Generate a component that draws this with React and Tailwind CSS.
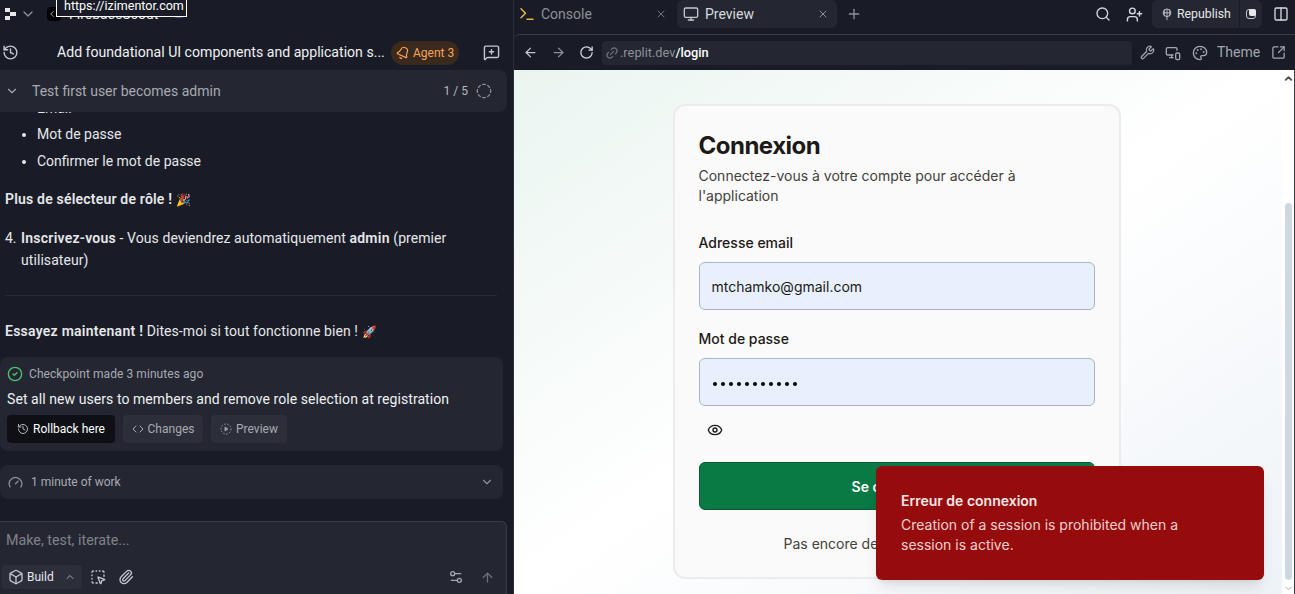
import React from 'react';
import {
  ArrowLeft, ArrowRight, ArrowUp, Bell, Box, ChevronDown, ChevronLeft, ChevronUp, CircleCheck, CircleDashed,
  Code, Columns2, Eye, Gauge, History, Link2, MessageSquarePlus, Monitor, MonitorSmartphone, Palette,
  Paperclip, Plus, RotateCw, Search, Settings2, SquareArrowOutUpRight, SquareDashedMousePointer,
  Terminal, UserPlus, Wrench, X,
} from 'lucide-react';

const plex = 'font-["Roboto",sans-serif]';

function Logo() {
  return (
    <svg width="12" height="12" viewBox="0 0 12 12" fill="#e8e8ea">
      <rect x="0" y="0" width="5" height="4" />
      <rect x="5" y="4" width="6" height="4" />
      <rect x="0" y="8" width="5" height="4" />
    </svg>
  );
}

function RepublishIcon() {
  return (
    <svg width="12" height="15" viewBox="0 0 14 16" fill="none" stroke="#c9cbd0" strokeWidth="1">
      <circle cx="7" cy="6" r="4.5" />
      <path d="M2.500 6h9M7 1.500v9M4.500 2.500c-1 2.300-1 4.700 0 7M9.500 2.500c1 2.300 1 4.700 0 7M7 10.500v4" />
    </svg>
  );
}

function DashedPlay() {
  return (
    <svg width="12" height="12" viewBox="0 0 24 24" fill="none" stroke="#9a9da6" strokeWidth="2">
      <circle cx="12" cy="12" r="10" strokeDasharray="3 3" />
      <path d="M10 8l6 4-6 4z" fill="#9a9da6" />
    </svg>
  );
}

function ChatPanel() {
  return (
    <div className={`w-[514px] shrink-0 h-full flex flex-col bg-[#191c26] border-r border-[#2c2f39] overflow-hidden ${plex}`}>
      <div className="h-[28px] mb-[7px] shrink-0 flex items-center pl-[5px]">
        <Logo />
        <ChevronDown className="w-4 h-4 ml-[3px] text-[#8d9099]" />
        <div className="ml-[11px] w-[14px] h-[14px] flex items-center rounded-sm bg-black">
          <ChevronLeft className="w-[10px] h-[10px] text-[#c4c6cc]" />
        </div>
        <span className="ml-[8px] text-[14px] text-[#e6e7ea]">FirebaseScout</span>
        <div className="ml-[15px] w-[11px] h-[8px] rounded-sm bg-[#4b4590]" />
      </div>
      <div className="h-[35px] shrink-0 flex items-center pl-[2px]">
        <History className="w-[17px] h-[17px] text-[#c4c6cc]" />
        <span className="ml-[38px] w-[334px] text-[14.1px] text-[#eef0f3] whitespace-nowrap">Add foundational UI components and application s...</span>
        <span className="flex items-center gap-[3px] h-[24px] px-[5px] rounded-full bg-[#3a2a1e] text-[12px] text-[#f9a25a]">
          <Bell className="w-[14px] h-[14px] rotate-[25deg]" />
          Agent 3
        </span>
        <MessageSquarePlus className="ml-[24px] w-[17px] h-[17px] text-[#c4c6cc]" />
      </div>
      <div className="relative z-10 h-[42px] w-[507px] shrink-0 flex items-center pl-[5px] pr-[15px] rounded-lg rounded-l-none bg-[#242731]">
        <ChevronDown className="w-[14px] h-[14px] text-[#a4a6ad]" />
        <span className="ml-[13px] text-[14px] text-[#a8aab1]">Test first user becomes admin</span>
        <span className="ml-auto text-[12px] text-[#b5b7bd]">1 / 5</span>
        <CircleDashed className="ml-[8px] w-4 h-4 text-[#8d9099]" />
      </div>
      <div className="flex-1 min-h-0 overflow-hidden px-[5px] text-[14px] text-[#e6e7ea]">
        <ul className="-mt-[17px] list-disc pl-[32px] leading-[27px]">
          <li className="leading-[26px]">Email</li>
          <li>Mot de passe</li>
          <li>Confirmer le mot de passe</li>
        </ul>
        <p className="mt-[13px] leading-[22px] font-semibold tracking-[0.2px]">Plus de sélecteur de rôle ! <span className="text-[12px]">🎉</span></p>
        <div className="mt-[16px] w-[470px] flex leading-[22px]">
          <span className="w-[16px] shrink-0">4.</span>
          <p className="tracking-[0.07px]"><b className="font-semibold tracking-[0.25px]">Inscrivez-vous</b> - Vous deviendrez automatiquement <b className="font-semibold tracking-[0.25px]">admin</b> (premier utilisateur)</p>
        </div>
        <div className="mt-[24px] w-[492px] h-px bg-[#282b35]" />
        <p className="mt-[24px] leading-[22px] tracking-[0.07px]"><b className="font-semibold tracking-[0.25px]">Essayez maintenant !</b> Dites-moi si tout fonctionne bien ! <span className="text-[12px]">🚀</span></p>
        <div className="-ml-[5px] mt-[14px] w-[503px] h-[94px] rounded-lg bg-[#242731] pl-[7px] pt-[8px]">
          <div className="flex items-center gap-[6px] text-[12px] tracking-[0.07px] text-[#a8aab1]">
            <CircleCheck className="w-[16px] h-[16px] text-[#4cc36e]" />
            Checkpoint made 3 minutes ago
          </div>
          <p className="mt-[6px] leading-[20px] tracking-[0.07px] text-[#eef0f3]">Set all new users to members and remove role selection at registration</p>
          <div className="mt-[6px] flex gap-[8px] text-[12px]">
            <span className="h-[28px] w-[108px] flex items-center justify-center gap-[4px] rounded bg-[#0e1016] text-white">
              <History className="w-[12px] h-[12px] text-[#b5b7bd]" />
              Rollback here
            </span>
            <span className="h-[28px] w-[80px] flex items-center justify-center gap-[4px] rounded bg-[#2c2f39] text-[#a8aab1]">
              <Code className="w-[12px] h-[12px]" />
              Changes
            </span>
            <span className="h-[28px] w-[76px] flex items-center justify-center gap-[4px] rounded bg-[#2c2f39] text-[#a8aab1]">
              <DashedPlay />
              Preview
            </span>
          </div>
        </div>
        <div className="-ml-[5px] mt-[14px] w-[503px] h-[34px] flex items-center rounded-lg bg-[#242731] pl-[8px] pr-[9px] text-[12px] text-[#a8aab1]">
          <Gauge className="w-[15px] h-[15px] text-[#8d9099]" />
          <span className="ml-[8px]">1 minute of work</span>
          <ChevronDown className="ml-auto w-[14px] h-[14px] text-[#8d9099]" />
        </div>
      </div>
      <div className="h-[73px] w-[507px] shrink-0 rounded-tr-md border-t border-r border-[#3a3d47] bg-[#242731] flex flex-col">
        <div className="pl-[6px] pt-[8px] text-[14.3px] leading-[20px] text-[#7f828b]">Make, test, iterate...</div>
        <div className="mt-auto mb-[5px] flex items-center pl-[2px] pr-[11px]">
          <span className="h-[24px] w-[80px] flex items-center pl-[6px] rounded bg-[#2c2f39] text-[12px] text-[#e6e7ea]">
            <Box className="w-[16px] h-[16px] text-[#c4c6cc]" />
            <span className="ml-[3px]">Build</span>
            <ChevronUp className="ml-[10px] w-[12px] h-[12px] text-[#a4a6ad]" />
          </span>
          <SquareDashedMousePointer className="ml-[8px] w-[16px] h-[16px] text-[#c4c6cc]" />
          <Paperclip className="ml-[12px] w-[16px] h-[16px] text-[#c4c6cc]" />
          <Settings2 className="ml-auto w-[16px] h-[16px] text-[#a4a6ad]" />
          <ArrowUp className="ml-[16px] w-[15px] h-[15px] text-[#6f727b]" />
        </div>
      </div>
    </div>
  );
}

function TabBar() {
  return (
    <div className={`h-[34px] shrink-0 flex items-center pb-[6px] ${plex}`}>
      <div className="w-[163px] h-[28px] flex items-center pl-[4px] text-[14px] text-[#8d9099]">
        <Terminal className="w-[18px] h-[18px] text-[#e0b84c]" />
        <span className="ml-[5px]">Console</span>
        <X className="ml-auto mr-[10px] w-[12px] h-[12px] text-[#6f727b]" />
      </div>
      <div className="w-[160px] h-[28px] flex items-center pl-[6px] rounded-md bg-[#242731] text-[14px] text-[#d7d9dd]">
        <Monitor className="w-[16px] h-[16px] text-[#c4c6cc]" />
        <span className="ml-[6px]">Preview</span>
        <X className="ml-auto mr-[8px] w-[12px] h-[12px] text-[#8d9099]" />
      </div>
      <Plus className="ml-[9px] w-[16px] h-[16px] text-[#8d9099]" />
      <Search className="ml-auto w-[16px] h-[16px] text-[#d7d9dd]" />
      <UserPlus className="ml-[15px] w-[17px] h-[17px] text-[#d7d9dd]" />
      <div className="ml-[9px] h-[28px] flex rounded-md bg-[#242731]">
        <span className="w-[88px] flex items-center pl-[9px] gap-[4px] text-[12.3px] text-[#e6e7ea] border-r border-[#191c26]">
          <RepublishIcon />
          Republish
        </span>
        <span className="w-[22px] flex items-center justify-center">
          <span className="relative w-[10px] h-[10px] rounded-[3px] border border-[#c4c6cc]">
            <span className="absolute -top-px -right-px w-[7px] h-[7px] rounded-[2px] bg-[#e6e7ea]" />
          </span>
        </span>
      </div>
      <Columns2 className="ml-[11px] mr-[6px] w-[16px] h-[16px] text-[#d7d9dd]" />
    </div>
  );
}

function UrlBar() {
  return (
    <div className={`h-[36px] shrink-0 flex items-center rounded-tl-md border-t border-[#3a3d47] pl-[9px] ${plex}`}>
      <ArrowLeft className="w-[15px] h-[15px] text-[#c4c6cc]" />
      <ArrowRight className="ml-[13px] w-[15px] h-[15px] text-[#8d9099]" />
      <RotateCw className="ml-[13px] w-[15px] h-[15px] text-[#d7d9dd]" />
      <div className="ml-[8px] w-[530px] h-[24px] flex items-center pl-[3px] rounded bg-[#242731] text-[12.8px]">
        <Link2 className="w-[14px] h-[14px] -rotate-45 text-[#6f727b]" />
        <span className="ml-[1px] text-[#8d9099]">.replit.dev</span>
        <span className="font-medium text-white">/login</span>
      </div>
      <Wrench className="ml-[8px] w-[15px] h-[15px] text-[#a4a6ad]" />
      <MonitorSmartphone className="ml-[10px] w-[16px] h-[16px] text-[#a4a6ad]" />
      <Palette className="ml-[11px] w-[16px] h-[16px] text-[#a4a6ad]" />
      <span className="ml-[9px] text-[14px] text-[#a4a6ad]">Theme</span>
      <SquareArrowOutUpRight className="ml-[11px] w-[15px] h-[15px] text-[#a4a6ad]" />
    </div>
  );
}

function LoginPage() {
  return (
    <div className="relative flex-1 min-h-0 flex bg-white overflow-hidden font-['Inter',sans-serif]">
      <div className="flex-1 bg-gradient-to-br from-[#eaf5f0] via-white to-[#eef3f8] overflow-hidden flex justify-center pt-[34px] pr-[3px]">
        <div className="w-[448px] h-[475px] shrink-0 rounded-xl border-2 border-[#ececee] bg-[#fafafa] px-[24px] pt-[24px]">
          <h1 className="text-[24px] leading-[32px] font-bold tracking-[-0.5px] text-[#1c1917]">Connexion</h1>
          <p className="mt-[4px] w-[380px] text-[14px] leading-[20px] text-[#44403c]">Connectez-vous à votre compte pour accéder à l'application</p>
          <label className="block mt-[27px] text-[14px] leading-[20px] font-medium text-[#1c1917]">Adresse email</label>
          <div className="mt-[9px] h-[48px] flex items-center px-[12px] rounded-md border border-[#aab4c6] bg-[#e8f0fe] text-[14px] text-[#1c1917]">mtchamko@gmail.com</div>
          <label className="block mt-[19px] text-[14px] leading-[20px] font-medium text-[#1c1917]">Mot de passe</label>
          <div className="mt-[9px] h-[48px] flex items-center gap-[4px] px-[13px] pt-[3px] rounded-md border border-[#aab4c6] bg-[#e8f0fe]">
            {Array.from({ length: 11 }).map((_, i) => (
              <span key={i} className="w-[4px] h-[4px] rounded-full bg-black" />
            ))}
          </div>
          <Eye className="mt-[16px] ml-[8px] w-[16px] h-[16px] text-[#1c1917]" />
          <div className="mt-[24px] h-[48px] flex items-center justify-center rounded-md border border-[#075c34] bg-[#0a7a45] text-[14px] font-semibold text-white">Se connecter</div>
          <p className="mt-[24px] text-center text-[14px] leading-[20px] text-[#44403c]">Pas encore de compte ? S'inscrire</p>
        </div>
      </div>
      <div className="w-[13px] shrink-0 flex flex-col items-center bg-white border-r border-[#3a3d47]">
        <ChevronUp className="mt-[3px] w-[11px] h-[11px] text-[#505050]" strokeWidth={4} />
        <div className="mt-[119px] w-[7px] h-[377px] rounded-full bg-[#cdd8e3]" />
        <ChevronDown className="mt-[3px] w-[11px] h-[11px] text-[#a3a3a3]" />
      </div>
      <div className="absolute left-[362px] bottom-[14px] w-[388px] h-[114px] rounded-md bg-[#960c0c] pl-[25px] pt-[25px] shadow-lg">
        <p className="text-[14px] leading-[20px] font-semibold text-[#f8e8e8]">Erreur de connexion</p>
        <p className="mt-[4px] w-[320px] text-[14px] leading-[20px] text-[#f0d0d0]">Creation of a session is prohibited when a session is active.</p>
      </div>
    </div>
  );
}

export default function App() {
  return (
    <div className="relative w-[1295px] h-[594px] flex overflow-hidden bg-[#191c26]">
      <ChatPanel />
      <div className="flex-1 min-w-0 h-full flex flex-col">
        <TabBar />
        <UrlBar />
        <LoginPage />
      </div>
      <div className={`absolute left-[56px] -top-[5px] w-[131px] h-[22px] px-[7px] border border-white bg-[#191c26] text-[12.5px] leading-[19px] whitespace-nowrap text-white ${plex}`}>https://izimentor.com</div>
    </div>
  );
}
